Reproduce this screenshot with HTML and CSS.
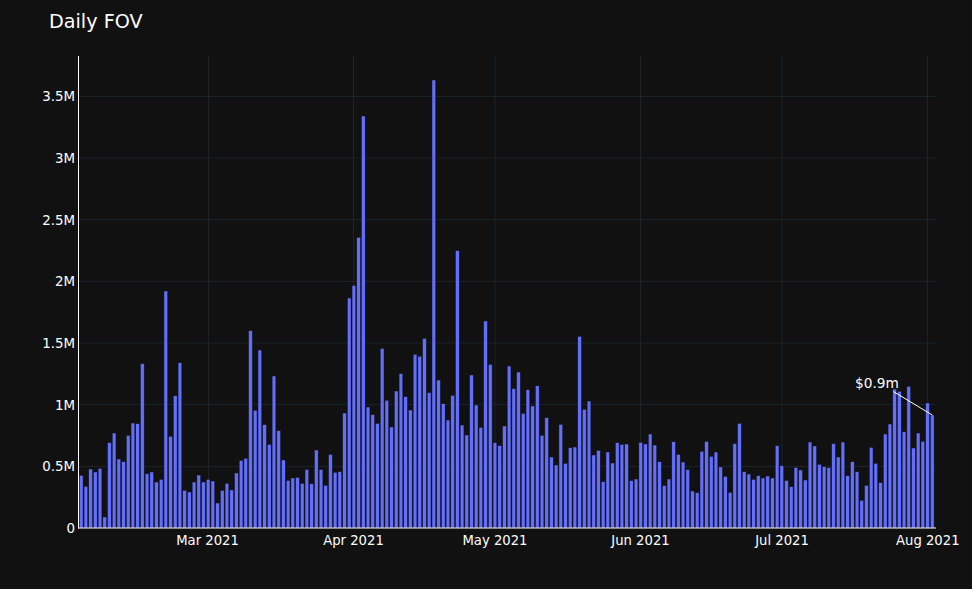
FILE: index.html
```html
<!DOCTYPE html>
<html lang="en">
<head>
<meta charset="utf-8">
<title>Daily FOV</title>
<link rel="stylesheet" href="styles.css">
</head>
<body>
<main class="chart">
  <svg id="plot" class="plot" width="972" height="589" viewBox="0 0 972 589" xmlns="http://www.w3.org/2000/svg">
    <g class="grid">
      <path d="M208.5 56V528M353.5 56V528M495 56V528M640.5 56V528M782 56V528M927.5 56V528"/>
      <path d="M79 96.5H936M79 158H936M79 219.5H936M79 281.5H936M79 343H936M79 404.5H936M79 466.5H936"/>
    </g>
    <g id="bars"></g>
    <path class="axis" d="M78.5 56V528.5M78 528H936"/>
    <text class="title" x="49" y="28">Daily FOV</text>
    <g class="ticks-y">
      <text x="75" y="532.5">0</text>
      <text x="75" y="471">0.5M</text>
      <text x="75" y="409.5">1M</text>
      <text x="75" y="348">1.5M</text>
      <text x="75" y="286">2M</text>
      <text x="75" y="224.5">2.5M</text>
      <text x="75" y="163">3M</text>
      <text x="75" y="101">3.5M</text>
    </g>
    <g class="ticks-x">
      <text x="207.5" y="545">Mar 2021</text>
      <text x="353.5" y="545">Apr 2021</text>
      <text x="495" y="545">May 2021</text>
      <text x="640.5" y="545">Jun 2021</text>
      <text x="782" y="545">Jul 2021</text>
      <text x="927.8" y="545">Aug 2021</text>
    </g>
    <path class="arrow" d="M893.3 391.5L932.3 415"/>
    <text class="note" x="877" y="388">$0.9m</text>
  </svg>
</main>
<script src="chart.js"></script>
</body>
</html>
```
FILE: styles.css
```css
html, body {
  margin: 0;
  padding: 0;
  background: #111111;
}
.chart {
  display: flex;
  width: 972px;
  height: 589px;
  overflow: hidden;
  background: #111111;
}
.plot {
  display: block;
  flex: none;
}
.grid path {
  fill: none;
  stroke: #283442;
  stroke-width: 1;
  stroke-opacity: 0.5;
}
.bar {
  fill: #636efa;
  stroke: #111111;
  stroke-width: 0.5;
}
.axis {
  fill: none;
  stroke: #ffffff;
  stroke-width: 1;
}
.title,
.ticks-y text,
.ticks-x text,
.note {
  font-family: "DejaVu Sans", Verdana, sans-serif;
  fill: #ffffff;
}
.title {
  font-size: 19.2px;
}
.ticks-y text {
  font-size: 13.4px;
  text-anchor: end;
}
.ticks-x text {
  font-size: 13.2px;
  text-anchor: middle;
}
.note {
  font-size: 13.7px;
  text-anchor: middle;
}
.arrow {
  fill: none;
  stroke: #ffffff;
  stroke-width: 1;
}
```
FILE: chart.js
```js
// Bar tops per day (2 Feb - 2 Aug 2021), read in 1/3 px steps from each baseline.
var segments = [
  [270, [616,649,597,606,595,741,518,489,567,575,496,459,461,281,611,606,636,628,63,499,377,278,661,666,636,615,636,628,633,699,661,640,660,609,571,565,182,421,240,464,523,318,482,570,631]],
  [270, [624,622,640,598,641,540,598,646,553,607,605,429,84,46,-98,-462,411,434,460,235,391,471,363,311,380,420,253,259,205,368,-570,330,401,450,376,-58,465,495,315,405,472,153,283,518,527]],
  [320, [318,138,206,156,280,209,258,197,346,293,411,435,313,430,383,381,49,268,243,405,391,485,396,429,368,373,372,482,477,367,372,342,375,425,497,477,365,403,426,449,513,518,394,364,409,396,441,469]],
  [360, [397,251,190,335,342,358,347,354,348,354,257,317,361,380,322,330,360,246,258,313,320,323,251,291,246,347,305,335,421,376,262,310,368,222,192,87,94,215,79,264,219,244,129,165]]
];
var NS = "http://www.w3.org/2000/svg";
var group = document.getElementById("bars");
var index = 0;
segments.forEach(function (segment) {
  segment[1].forEach(function (t) {
    var top = segment[0] + t / 3;
    var rect = document.createElementNS(NS, "rect");
    rect.setAttribute("class", "bar");
    rect.setAttribute("x", (81.2 + 4.702 * index - 1.88).toFixed(2));
    rect.setAttribute("width", "3.76");
    rect.setAttribute("y", top.toFixed(2));
    rect.setAttribute("height", (528 - top).toFixed(2));
    group.appendChild(rect);
    index++;
  });
});
```
